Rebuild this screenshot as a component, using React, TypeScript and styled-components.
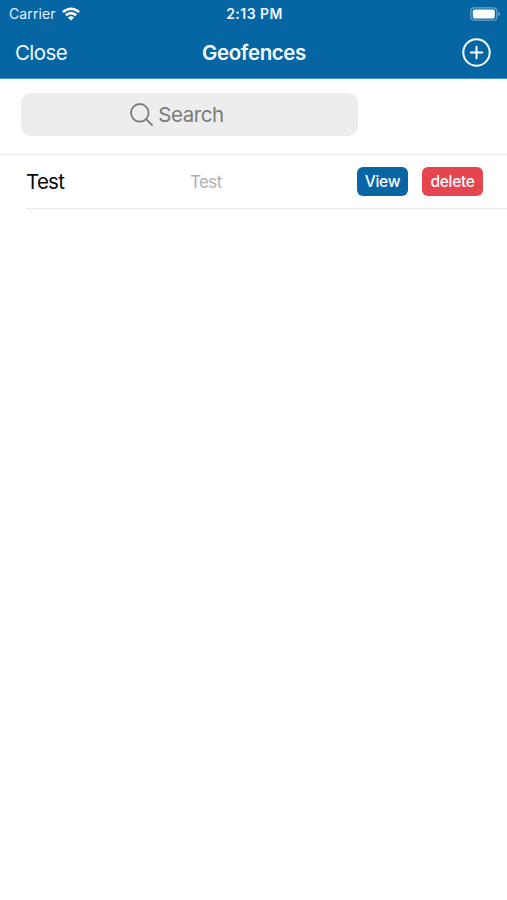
import React from "react";
import styled, { createGlobalStyle } from "styled-components";

const GlobalStyle = createGlobalStyle`
  * { box-sizing: border-box; }
  body { margin: 0; background: #fff; font-family: Inter, "Liberation Sans", sans-serif; }
  button { font-family: inherit; border: 0; margin: 0; padding: 0; }
`;

const Screen = styled.main`
  display: flex;
  flex-direction: column;
  width: 100%;
  height: 900px;
  overflow: hidden;
  background: #fff;
`;

const Header = styled.header`
  height: 79px;
  background: #0666a3;
  color: #fff;
  border-bottom: 1px solid #3f91c5;
`;

const StatusBar = styled.div`
  display: grid;
  grid-template-columns: 1fr auto 1fr;
  align-items: center;
  height: 26px;
  padding: 1px 7px 0 9px;
`;

const Carrier = styled.div`
  display: flex;
  align-items: center;
  gap: 6px;
  font-size: 14px;
  line-height: 18px;
  letter-spacing: 0.1px;
  color: #e3f0f8;
`;

const Clock = styled.div`
  font-size: 14px;
  line-height: 18px;
  font-weight: 600;
  letter-spacing: 0.45px;
  color: #eef7fc;
`;

const Battery = styled.div`
  display: flex;
  justify-content: flex-end;
  margin-right: -1px;
`;

const NavBar = styled.nav`
  display: grid;
  grid-template-columns: 1fr auto 1fr;
  align-items: center;
  height: 52px;
  padding: 0 16px 0 15px;
`;

const CloseButton = styled.button`
  justify-self: start;
  padding-top: 1px;
  background: none;
  color: #eef7fc;
  font-size: 20.5px;
  line-height: 26px;
  letter-spacing: -0.6px;
`;

const Title = styled.h1`
  margin: 0;
  padding: 1px 0 0 2px;
  font-size: 20.5px;
  line-height: 26px;
  font-weight: 600;
  letter-spacing: -0.4px;
  color: #f4faff;
`;

const AddButton = styled.button`
  display: flex;
  justify-self: end;
  background: none;
  color: #fff;
`;

const SearchArea = styled.section`
  height: 76px;
  padding: 14px 0 0 21px;
  border-bottom: 1px solid #ececec;
`;

const SearchField = styled.div`
  display: flex;
  align-items: center;
  justify-content: center;
  gap: 5px;
  width: 337px;
  height: 43px;
  padding-right: 25px;
  border-radius: 10px;
  background: #ededed;
  color: #7b7b7b;
  font-size: 20.5px;
  letter-spacing: -0.45px;
`;

const Row = styled.article`
  display: flex;
  align-items: center;
  height: 54px;
  margin-left: 26px;
  padding-right: 24px;
  border-bottom: 1px solid #e9e9e9;
`;

const Name = styled.span`
  width: 164px;
  font-size: 20.5px;
  letter-spacing: -0.75px;
  color: #080808;
`;

const Detail = styled.span`
  flex: 1;
  font-size: 17px;
  letter-spacing: -0.6px;
  color: #afafaf;
`;

const Actions = styled.div`
  display: flex;
  gap: 14px;
`;

const ActionButton = styled.button<{ $tone: string; $width: number }>`
  width: ${(p) => p.$width}px;
  height: 29px;
  border-radius: 6px;
  background: ${(p) => p.$tone};
  color: #f7fbff;
  font-size: 15.5px;
  font-weight: 500;
  line-height: 29px;
  letter-spacing: -0.3px;
`;

function WifiIcon() {
  return (
    <svg width="18" height="14" viewBox="0 0 18 14" fill="none" stroke="#fff" strokeWidth="2.5">
      <path d="M0.9 5.1Q9 -1.7 17.1 5.1" />
      <path d="M3.8 8.3Q9 3.9 14.2 8.3" />
      <path d="M9 13.6L5.9 10.5Q9 8 12.1 10.5Z" fill="#fff" stroke="none" />
    </svg>
  );
}

function BatteryIcon() {
  return (
    <svg width="31" height="14" viewBox="0 0 31 14">
      <rect x="0.8" y="0.8" width="26" height="12.4" rx="3.5" fill="none" stroke="#6ba5ca" strokeWidth="1.2" />
      <rect x="2.8" y="2.5" width="22" height="9" rx="1.8" fill="#fff" />
      <path d="M28.2 4.8Q30.1 5.8 30.1 7T28.2 9.2Z" fill="#6ba5ca" />
    </svg>
  );
}

function PlusCircleIcon() {
  return (
    <svg width="29" height="29" viewBox="0 0 29 29" fill="none" stroke="currentColor" strokeWidth="2" strokeLinecap="round">
      <circle cx="14.5" cy="14.5" r="13.2" />
      <path d="M8.8 14.5H20.2M14.5 8.8V20.2" />
    </svg>
  );
}

function SearchIcon() {
  return (
    <svg width="23" height="23" viewBox="0 0 23 23" fill="none" stroke="currentColor" strokeWidth="1.8" strokeLinecap="round">
      <circle cx="9.8" cy="9.8" r="8.8" />
      <path d="M16.1 16.1L22 22" />
    </svg>
  );
}

const geofences = [{ name: "Test", detail: "Test" }];

export default function App() {
  return (
    <Screen>
      <GlobalStyle />
      <Header>
        <StatusBar>
          <Carrier>Carrier <WifiIcon /></Carrier>
          <Clock>2:13 PM</Clock>
          <Battery><BatteryIcon /></Battery>
        </StatusBar>
        <NavBar>
          <CloseButton>Close</CloseButton>
          <Title>Geofences</Title>
          <AddButton aria-label="Add geofence"><PlusCircleIcon /></AddButton>
        </NavBar>
      </Header>
      <SearchArea>
        <SearchField role="search"><SearchIcon />Search</SearchField>
      </SearchArea>
      {geofences.map((item) => (
        <Row key={item.name}>
          <Name>{item.name}</Name>
          <Detail>{item.detail}</Detail>
          <Actions>
            <ActionButton $tone="#0866a5" $width={51}>View</ActionButton>
            <ActionButton $tone="#e5454f" $width={61}>delete</ActionButton>
          </Actions>
        </Row>
      ))}
    </Screen>
  );
}
